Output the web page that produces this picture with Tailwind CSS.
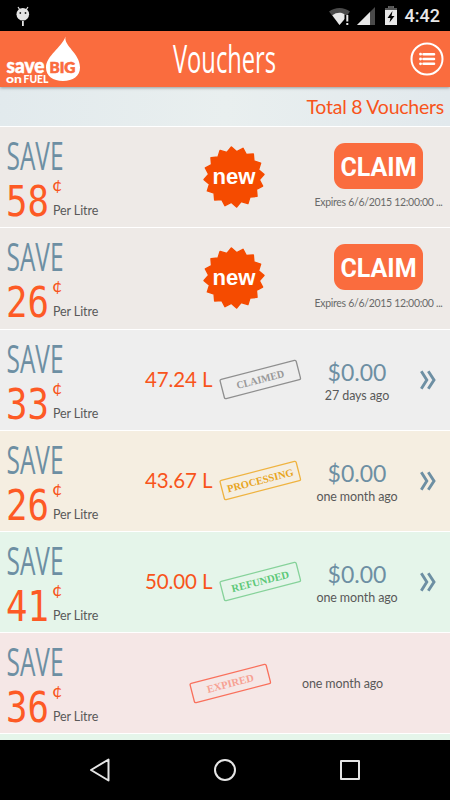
<!DOCTYPE html>
<html lang="en">
  <head>
    <meta charset="UTF-8" />
    <meta name="viewport" content="width=device-width, initial-scale=1.0" />
    <title>Vouchers - Save Big On Fuel</title>
    <script src="https://cdn.jsdelivr.net/npm/@tailwindcss/browser@4"></script>
  </head>
  <body class="bg-black font-['Lato',sans-serif]">
    <!-- Shared shapes -->
    <svg class="hidden">
      <symbol id="save" viewBox="0 0 58 30" overflow="visible">
        <text x="-.5" y="28.5" font-size="39" textLength="57" lengthAdjust="spacingAndGlyphs" font-family="Open Sans" font-weight="400" fill="#6d8fa3">SAVE</text>
      </symbol>
      <symbol id="burst" viewBox="0 0 62 62">
        <polygon id="burst-shape" fill="#f54b00" stroke="#f54b00" stroke-width="1.5" stroke-linejoin="round" />
        <text x="31" y="37.5" text-anchor="middle" font-size="22" textLength="43" lengthAdjust="spacingAndGlyphs" font-family="Liberation Sans" font-weight="700" fill="#fff">new</text>
      </symbol>
      <symbol id="chevrons" viewBox="0 0 16 20">
        <path d="M1.3 1.3 6.8 10 1.3 18.7M8.3 1.3l5.7 8.700-5.700 8.700" fill="none" stroke="#6d8fa3" stroke-width="2.900" />
      </symbol>
    </svg>

    <div class="flex h-[800px] w-[450px] flex-col overflow-hidden">
      <!-- Status Bar -->
      <div class="flex h-[31px] shrink-0 items-center bg-black pr-[10px] pl-4">
        <svg class="h-5 w-[14px]" viewBox="0 0 14 20" fill="#e4e4e4">
          <path d="M2 1l2 3M12 1l-2 3" stroke="#e4e4e4" stroke-width="1.2" />
          <circle cx="6.8" cy="8.3" r="6.3" />
          <path d="M6 15h1.8v5H6z" />
          <circle cx="4.3" cy="7" r=".9" fill="#222" />
          <circle cx="9.5" cy="7" r=".9" fill="#222" />
        </svg>
        <svg class="ml-auto h-[20px] w-[22px]" viewBox="0 0 22 20">
          <path d="M0 5.5C6 .7 15 .7 21 5.5L18.5 9H15v5L10.500 19z" fill="#4a4a4a" />
          <path d="M3.300 9.200C7.500 6 13 6 15.500 8.500V13l-5 6z" fill="#e8e8e8" />
          <path d="M18.300 9v6.500M18.300 17v2" stroke="#e8e8e8" stroke-width="2" />
        </svg>
        <svg class="ml-[6px] h-[18px] w-[18px]" viewBox="0 0 18 18">
          <path d="M18 0v18H0z" fill="#4a4a4a" />
          <path d="M13 5v13H0z" fill="#e8e8e8" />
        </svg>
        <svg class="ml-[10px] h-[19px] w-3" viewBox="0 0 12 19">
          <path d="M3.500 0h5v2H12v17H0V2h3.500z" fill="#e8e8e8" />
          <path d="M3.500 0h5v2H12v2H0V2h3.500z" fill="#555" />
          <path d="M7.500 5 2.500 12h3L4.500 16.500 9.500 10h-3z" fill="#000" />
        </svg>
        <span class="ml-2 font-['Roboto',sans-serif] text-[18px] leading-none font-medium text-[#e8e8e8]">4:42</span>
      </div>

      <!-- Header -->
      <header class="z-10 flex h-[56px] shrink-0 items-center justify-between bg-[#fa6c3e] pr-[6px] pl-[5px] shadow-[0_1px_3px_rgba(0,0,0,0.35)]">
        <svg class="h-[56px] w-[78px]" viewBox="0 0 78 56">
          <path d="M60.500 5.500C58.500 15 75 22 75 36.500C75 45 68 50 58 50S41 45 41 36.500C41 25 57 16 60.500 5.500z" fill="#fff" />
          <g font-family="Lato" font-weight="900" fill="#fff">
            <text x="1.500" y="41.500" font-size="20" textLength="38" lengthAdjust="spacingAndGlyphs" stroke="#fff" stroke-width=".5">save</text>
            <text x="1" y="51.500" font-size="12" textLength="16" lengthAdjust="spacingAndGlyphs">on</text>
            <text x="18.500" y="51.500" font-size="11" textLength="25" lengthAdjust="spacingAndGlyphs">FUEL</text>
            <text x="44.500" y="41.500" font-size="14.500" textLength="26" lengthAdjust="spacingAndGlyphs" fill="#fa6c3e" stroke="#fa6c3e" stroke-width=".6">BIG</text>
          </g>
        </svg>
        <svg class="h-[56px] w-[104px] overflow-visible" viewBox="0 0 104 56">
          <text x="0" y="41.500" font-size="37.500" textLength="103" lengthAdjust="spacingAndGlyphs" font-family="Open Sans" font-weight="400" fill="#fff">Vouchers</text>
        </svg>
        <svg class="ml-[44px] h-[34px] w-[34px]" viewBox="0 0 34 34" fill="none" stroke="#fff">
          <circle cx="17" cy="17" r="15.500" stroke-width="2" />
          <path d="M13.500 12.200h10.500M13.500 17h10.500M13.500 21.800h10.500" stroke-width="2.600" stroke-linecap="round" />
          <path d="M10.500 12.200h.1M10.500 17h.1M10.500 21.800h.1" stroke-width="2.800" stroke-linecap="round" />
        </svg>
      </header>

      <div class="flex h-[39px] shrink-0 items-center justify-end bg-linear-to-r from-[#e2eaed] via-[#e9efef] to-[#e2e9ed] pr-[6px] text-[19.500px] tracking-[-0.25px] text-[#f8541b]">
        Total 8 Vouchers
      </div>

      <!-- Voucher List -->
      <main class="flex-1 overflow-hidden">
        <section class="flex h-[101px] border-t border-white bg-[#eeeae7]">
          <div class="w-[145px] pt-[14px] pl-[7px]">
            <svg class="h-[30px] w-[58px] overflow-visible"><use href="#save" /></svg>
            <div class="mt-[10px] flex">
              <svg class="h-[38px] w-[42px] overflow-visible" viewBox="0 0 42 38">
                <text x="-1" y="34.500" font-size="42.500" textLength="43" lengthAdjust="spacingAndGlyphs" font-family="DejaVu Sans Mono" fill="#fd5a25">58</text>
              </svg>
              <div class="ml-[3px] flex flex-col text-[12.500px] leading-4 tracking-[-0.1px] text-[#595959]">
                <span class="-mt-2 mb-2 text-[18px] leading-[22px] text-[#f8541b]">¢</span>
                <span class="ml-px">Per Litre</span>
              </div>
            </div>
          </div>
          <svg class="mt-[19px] ml-[58px] h-[62px] w-[62px]"><use href="#burst" /></svg>
          <div class="ml-[48px] flex w-[131px] flex-col items-center pt-4">
            <button class="h-[46px] w-[89px] rounded-[11px] bg-[#fa6c3e] pt-[3px] font-['Roboto',sans-serif] text-[25px] font-bold text-white">CLAIM</button>
            <p class="mt-[5px] text-[10.500px] leading-4 tracking-[-0.3px] whitespace-nowrap text-[#6a6a6a]">Expires 6/6/2015 12:00:00 ...</p>
          </div>
        </section>

        <section class="flex h-[102px] border-t border-white bg-[#eeeae7]">
          <div class="w-[145px] pt-[14px] pl-[7px]">
            <svg class="h-[30px] w-[58px] overflow-visible"><use href="#save" /></svg>
            <div class="mt-[10px] flex">
              <svg class="h-[38px] w-[42px] overflow-visible" viewBox="0 0 42 38">
                <text x="-1" y="34.500" font-size="42.500" textLength="43" lengthAdjust="spacingAndGlyphs" font-family="DejaVu Sans Mono" fill="#fd5a25">26</text>
              </svg>
              <div class="ml-[3px] flex flex-col text-[12.500px] leading-4 tracking-[-0.1px] text-[#595959]">
                <span class="-mt-2 mb-2 text-[18px] leading-[22px] text-[#f8541b]">¢</span>
                <span class="ml-px">Per Litre</span>
              </div>
            </div>
          </div>
          <svg class="mt-[19px] ml-[58px] h-[62px] w-[62px]"><use href="#burst" /></svg>
          <div class="ml-[48px] flex w-[131px] flex-col items-center pt-4">
            <button class="h-[46px] w-[89px] rounded-[11px] bg-[#fa6c3e] pt-[3px] font-['Roboto',sans-serif] text-[25px] font-bold text-white">CLAIM</button>
            <p class="mt-[5px] text-[10.500px] leading-4 tracking-[-0.3px] whitespace-nowrap text-[#6a6a6a]">Expires 6/6/2015 12:00:00 ...</p>
          </div>
        </section>

        <section class="flex h-[101px] border-t border-white bg-[#eeeeee]">
          <div class="w-[145px] pt-[14px] pl-[7px]">
            <svg class="h-[30px] w-[58px] overflow-visible"><use href="#save" /></svg>
            <div class="mt-[10px] flex">
              <svg class="h-[38px] w-[42px] overflow-visible" viewBox="0 0 42 38">
                <text x="-1" y="34.500" font-size="42.500" textLength="43" lengthAdjust="spacingAndGlyphs" font-family="DejaVu Sans Mono" fill="#fd5a25">33</text>
              </svg>
              <div class="ml-[3px] flex flex-col text-[12.500px] leading-4 tracking-[-0.1px] text-[#595959]">
                <span class="-mt-2 mb-2 text-[18px] leading-[22px] text-[#f8541b]">¢</span>
                <span class="ml-px">Per Litre</span>
              </div>
            </div>
          </div>
          <p class="w-[74px] pt-[34px] text-[20.500px] tracking-[-0.1px] whitespace-nowrap text-[#f8541b]">47.24 L</p>
          <svg class="mt-[29px] h-[42px] w-[84px]" viewBox="0 0 84 42">
            <g transform="rotate(-14.500 41.300 20.500)" fill="#999">
              <rect x="2" y="10.600" width="78.600" height="19.800" rx="1.500" fill="none" stroke="#8f8f8f" stroke-width="1.300" />
              <text x="41.300" y="24" text-anchor="middle" font-size="10.500" textLength="49" lengthAdjust="spacingAndGlyphs" font-family="Liberation Serif" font-weight="700">CLAIMED</text>
            </g>
          </svg>
          <div class="w-[108px] pt-[26px] text-center text-[#595959]">
            <p class="text-[23px] leading-8 text-[#6d8fa3]">$0.00</p>
            <p class="text-[12.500px] leading-4 tracking-[-0.1px]">27 days ago</p>
          </div>
          <svg class="mt-10 ml-[9px] h-5 w-4"><use href="#chevrons" /></svg>
        </section>

        <section class="flex h-[101px] border-t border-white bg-[#f5eee1]">
          <div class="w-[145px] pt-[14px] pl-[7px]">
            <svg class="h-[30px] w-[58px] overflow-visible"><use href="#save" /></svg>
            <div class="mt-[10px] flex">
              <svg class="h-[38px] w-[42px] overflow-visible" viewBox="0 0 42 38">
                <text x="-1" y="34.500" font-size="42.500" textLength="43" lengthAdjust="spacingAndGlyphs" font-family="DejaVu Sans Mono" fill="#fd5a25">26</text>
              </svg>
              <div class="ml-[3px] flex flex-col text-[12.500px] leading-4 tracking-[-0.1px] text-[#595959]">
                <span class="-mt-2 mb-2 text-[18px] leading-[22px] text-[#f8541b]">¢</span>
                <span class="ml-px">Per Litre</span>
              </div>
            </div>
          </div>
          <p class="w-[74px] pt-[34px] text-[20.500px] tracking-[-0.1px] whitespace-nowrap text-[#f8541b]">43.67 L</p>
          <svg class="mt-[29px] h-[42px] w-[84px]" viewBox="0 0 84 42">
            <g transform="rotate(-14.500 41.300 20.500)" fill="#e8a51d">
              <rect x="2" y="10.600" width="78.600" height="19.800" rx="1.500" fill="none" stroke="#efb340" stroke-width="1.300" />
              <text x="41.300" y="24" text-anchor="middle" font-size="10.500" textLength="68" lengthAdjust="spacingAndGlyphs" font-family="Liberation Serif" font-weight="700">PROCESSING</text>
            </g>
          </svg>
          <div class="w-[108px] pt-[26px] text-center text-[#595959]">
            <p class="text-[23px] leading-8 text-[#6d8fa3]">$0.00</p>
            <p class="text-[12.500px] leading-4 tracking-[-0.1px]">one month ago</p>
          </div>
          <svg class="mt-10 ml-[9px] h-5 w-4"><use href="#chevrons" /></svg>
        </section>

        <section class="flex h-[101px] border-t border-white bg-[#e5f5ea]">
          <div class="w-[145px] pt-[14px] pl-[7px]">
            <svg class="h-[30px] w-[58px] overflow-visible"><use href="#save" /></svg>
            <div class="mt-[10px] flex">
              <svg class="h-[38px] w-[42px] overflow-visible" viewBox="0 0 42 38">
                <text x="-1" y="34.500" font-size="42.500" textLength="43" lengthAdjust="spacingAndGlyphs" font-family="DejaVu Sans Mono" fill="#fd5a25">41</text>
              </svg>
              <div class="ml-[3px] flex flex-col text-[12.500px] leading-4 tracking-[-0.1px] text-[#595959]">
                <span class="-mt-2 mb-2 text-[18px] leading-[22px] text-[#f8541b]">¢</span>
                <span class="ml-px">Per Litre</span>
              </div>
            </div>
          </div>
          <p class="w-[74px] pt-[34px] text-[20.500px] tracking-[-0.1px] whitespace-nowrap text-[#f8541b]">50.00 L</p>
          <svg class="mt-[29px] h-[42px] w-[84px]" viewBox="0 0 84 42">
            <g transform="rotate(-14.500 41.300 20.500)" fill="#5cc878">
              <rect x="2" y="10.600" width="78.600" height="19.800" rx="1.500" fill="none" stroke="#86d29a" stroke-width="1.300" />
              <text x="41.300" y="24" text-anchor="middle" font-size="10.500" textLength="59" lengthAdjust="spacingAndGlyphs" font-family="Liberation Serif" font-weight="700">REFUNDED</text>
            </g>
          </svg>
          <div class="w-[108px] pt-[26px] text-center text-[#595959]">
            <p class="text-[23px] leading-8 text-[#6d8fa3]">$0.00</p>
            <p class="text-[12.500px] leading-4 tracking-[-0.1px]">one month ago</p>
          </div>
          <svg class="mt-10 ml-[9px] h-5 w-4"><use href="#chevrons" /></svg>
        </section>

        <section class="flex h-[101px] border-t border-white bg-[#f5e7e6]">
          <div class="w-[145px] pt-[14px] pl-[7px]">
            <svg class="h-[30px] w-[58px] overflow-visible"><use href="#save" /></svg>
            <div class="mt-[10px] flex">
              <svg class="h-[38px] w-[42px] overflow-visible" viewBox="0 0 42 38">
                <text x="-1" y="34.500" font-size="42.500" textLength="43" lengthAdjust="spacingAndGlyphs" font-family="DejaVu Sans Mono" fill="#fd5a25">36</text>
              </svg>
              <div class="ml-[3px] flex flex-col text-[12.500px] leading-4 tracking-[-0.1px] text-[#595959]">
                <span class="-mt-2 mb-2 text-[18px] leading-[22px] text-[#f8541b]">¢</span>
                <span class="ml-px">Per Litre</span>
              </div>
            </div>
          </div>
          <svg class="mt-[30px] ml-[44px] h-[42px] w-[84px]" viewBox="0 0 84 42">
            <g transform="rotate(-14.500 41.300 20.500)" fill="#f7a193">
              <rect x="2" y="10.600" width="78.600" height="19.800" rx="1.500" fill="none" stroke="#f9705c" stroke-width="1.300" />
              <text x="41.300" y="24" text-anchor="middle" font-size="10.500" textLength="48" lengthAdjust="spacingAndGlyphs" font-family="Liberation Serif" font-weight="700">EXPIRED</text>
            </g>
          </svg>
          <p class="w-[139px] pt-[43px] text-center text-[12.500px] leading-4 tracking-[-0.1px] text-[#595959]">one month ago</p>
        </section>

        <section class="h-[101px] border-t border-white bg-[#e5f5ea]"></section>
      </main>

      <!-- Navigation Bar -->
      <nav class="flex h-[60px] shrink-0 items-center justify-between bg-black px-[88px]">
        <svg class="h-6 w-6" viewBox="0 0 24 24" fill="none" stroke="#e6e6e6" stroke-width="2" stroke-linejoin="round">
          <path d="M20.500 1.500v21L3 12z" />
        </svg>
        <svg class="h-6 w-6" viewBox="0 0 24 24" fill="none" stroke="#e6e6e6" stroke-width="2">
          <circle cx="12" cy="12" r="10" />
        </svg>
        <svg class="h-6 w-6" viewBox="0 0 24 24" fill="none" stroke="#e6e6e6" stroke-width="2" stroke-linejoin="round">
          <path d="M3 3h18v18H3z" />
        </svg>
      </nav>
    </div>

    <script>
      // 16 pointed burst behind "new"
      var points = [];
      for (var i = 0; i < 32; i++) {
        var r = i % 2 ? 25.5 : 30;
        var a = ((-5 + i * 11.25) * Math.PI) / 180;
        points.push((31 + r * Math.cos(a)).toFixed(1) + "," + (31 + r * Math.sin(a)).toFixed(1));
      }
      document.getElementById("burst-shape").setAttribute("points", points.join(" "));
    </script>
  </body>
</html>
